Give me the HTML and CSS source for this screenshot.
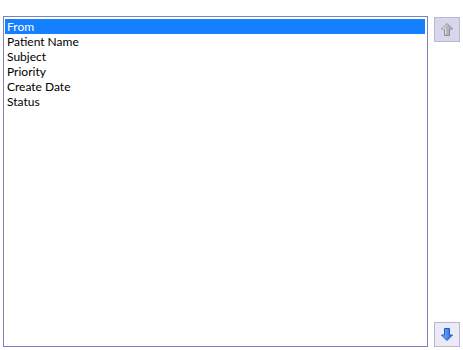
FILE: index.html
```html
<!DOCTYPE html>
<html lang="en">
<head>
    <meta charset="UTF-8">
    <title>Columns</title>
    <link rel="stylesheet" href="styles.css">
</head>
<body>
    <div class="picker">
        <!-- List of columns -->
        <div class="listbox">
            <div class="item selected">From</div>
            <div class="item">Patient Name</div>
            <div class="item">Subject</div>
            <div class="item">Priority</div>
            <div class="item">Create Date</div>
            <div class="item">Status</div>
        </div>

        <!-- Move up / down -->
        <div class="buttons">
            <button class="move disabled" title="Move up">
                <svg width="14" height="15" viewBox="0 0 14 15">
                    <path d="M7 1.5 L12.5 7 L9.5 7 L9.5 13.5 L4.5 13.5 L4.5 7 L1.5 7 Z" fill="#b4b4bc" stroke="#8e8e98" stroke-width="1"/>
                    <path d="M7 2.5 L3 6.5 L5.5 6.5 L5.5 12.5" fill="none" stroke="#e4e4ea" stroke-width="1"/>
                </svg>
            </button>
            <button class="move" title="Move down">
                <svg width="14" height="15" viewBox="0 0 14 15">
                    <defs>
                        <linearGradient id="down" x1="0" y1="0" x2="1" y2="0">
                            <stop offset="0" stop-color="#7cbcff"/>
                            <stop offset="1" stop-color="#1a62dc"/>
                        </linearGradient>
                    </defs>
                    <path d="M4.5 1.5 L9.5 1.5 L9.5 8 L12.5 8 L7 13.5 L1.5 8 L4.5 8 Z" fill="url(#down)" stroke="#2058c4" stroke-width="1"/>
                </svg>
            </button>
        </div>
    </div>
</body>
</html>
```

FILE: styles.css
```css
body {
    margin: 0;
    background: #fff;
    font-family: Lato, "Liberation Sans", sans-serif;
    font-size: 12px;
    color: #000;
}

.picker {
    display: flex;
    padding: 16px 0 0 3px;
}

/* Список колонок */
.listbox {
    width: 425px;
    height: 331px;
    border: 1px solid #8080c0;
    padding: 2px 2px 1px 1px;
    box-sizing: border-box;
}

.item {
    height: 15px;
    line-height: 15px;
    padding-left: 2px;
    white-space: nowrap;
}

.item.selected {
    background: #1580ff;
    color: #fff;
}

/* Кнопки вверх / вниз */
.buttons {
    display: flex;
    flex-direction: column;
    justify-content: space-between;
    height: 331px;
    box-sizing: border-box;
    margin-left: 6px;
    padding-top: 1px;
}

.move {
    width: 26px;
    height: 25px;
    padding: 0;
    border: 1px solid #b8b8cc;
    background: #eaeaf8;
    display: flex;
    align-items: center;
    justify-content: center;
}

.move.disabled {
    background: #d6d6ec;
}
```
